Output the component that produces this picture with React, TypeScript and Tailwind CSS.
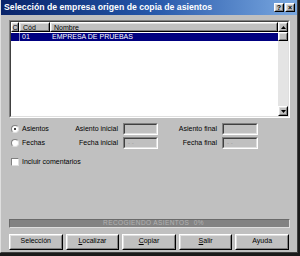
import React from "react";

const font = { fontFamily: '"Liberation Sans", Arial, sans-serif' };

const Raised = ({ className = "", children }: { className?: string; children?: React.ReactNode }) => (
    <div className={`border border-t-white border-l-white border-r-black border-b-black ${className}`}>
        <div className="h-full w-full border border-t-[#dfdfdf] border-l-[#dfdfdf] border-r-[#808080] border-b-[#808080] flex items-center justify-center">
            {children}
        </div>
    </div>
);

const Field = ({ placeholder }: { placeholder?: string }) => (
    <div className="h-[12px] border border-t-[#808080] border-l-[#808080] border-r-white border-b-white">
        <div className="h-full border border-t-[#404040] border-l-[#404040] border-r-[#dfdfdf] border-b-[#dfdfdf] bg-[#c0c0c0] text-[6px] text-[#9a9a9a] pl-[3px] leading-[9px]">
            {placeholder}
        </div>
    </div>
);

const Radio = ({ checked }: { checked?: boolean }) => (
    <span className="relative inline-block w-[8px] h-[8px] rounded-full bg-white border border-t-[#808080] border-l-[#808080] border-r-[#dfdfdf] border-b-[#dfdfdf]">
        {checked && <span className="absolute left-[2px] top-[2px] w-[2px] h-[2px] rounded-full bg-black" />}
    </span>
);

const ArrowBtn = ({ up }: { up?: boolean }) => (
    <Raised className="w-[10px] h-[10px] bg-[#c0c0c0]">
        <svg width="5" height="3" viewBox="0 0 5 3">
            {up ? <polygon points="2.5,0 5,3 0,3" fill="black" /> : <polygon points="0,0 5,0 2.5,3" fill="black" />}
        </svg>
    </Raised>
);

const buttons = [
    { label: "Selección", u: "" },
    { label: "Localizar", u: "L" },
    { label: "Copiar", u: "C" },
    { label: "Salir", u: "S" },
    { label: "Ayuda", u: "" },
];

export default function App() {
    return (
        <div style={font} className="w-[300px] h-[256px] bg-[#1a1a1a] text-[7px] text-black">
            <div className="w-[298px] h-[253px] bg-[#c0c0c0] border-l border-l-[#dfdfdf] border-r border-r-[#404040] border-b border-b-[#404040] flex flex-col">
                {/* title bar */}
                <div className="h-[15px] flex items-center pl-[3px] pr-[2px] bg-gradient-to-r from-[#0a246a] via-[#2556a8] to-[#7aa8e0]">
                    <span className="text-white font-bold text-[8.7px] flex-1">
                        Selección de empresa origen de copia de asientos
                    </span>
                    <Raised className="w-[10px] h-[9px] bg-[#c0c0c0]">
                        <span className="text-[7px] font-bold leading-none">?</span>
                    </Raised>
                    <Raised className="w-[10px] h-[9px] ml-[1px] bg-[#c0c0c0]">
                        <span className="text-[7px] font-bold leading-none">×</span>
                    </Raised>
                </div>

                <div className="flex flex-col px-[8px] pt-[5px]">
                    {/* list box */}
                    <div className="h-[98px] mr-[-1px] border border-t-[#808080] border-l-[#808080] border-r-white border-b-white">
                        <div className="h-full border border-t-[#404040] border-l-[#404040] border-r-[#dfdfdf] border-b-[#dfdfdf] bg-white flex">
                            <div className="flex-1 flex flex-col">
                                <div className="flex h-[10px] bg-[#c0c0c0]">
                                    <Raised className="w-[8px] h-[10px] bg-[#c0c0c0]">
                                        <span className="underline leading-none">C</span>
                                    </Raised>
                                    <Raised className="w-[31px] h-[10px] bg-[#c0c0c0]">
                                        <span className="w-full pl-[2px] leading-none">Cód</span>
                                    </Raised>
                                    <Raised className="flex-1 h-[10px] bg-[#c0c0c0]">
                                        <span className="w-full pl-[2px] leading-none">Nombre</span>
                                    </Raised>
                                </div>
                                <div className="flex h-[8px] mt-[1px] bg-[#000080] text-white leading-[8px]">
                                    <div className="w-[8px]" />
                                    <div className="w-[1px] bg-[#8080c0]" />
                                    <div className="w-[30px] pl-[2px]">01</div>
                                    <div className="flex-1 pl-[2px]">EMPRESA DE PRUEBAS</div>
                                </div>
                            </div>
                            <div className="w-[10px] flex flex-col bg-[#e4e4e4]">
                                <ArrowBtn up />
                                <Raised className="w-[10px] h-[9px] bg-[#c0c0c0]" />
                                <div className="flex-1" />
                                <ArrowBtn />
                            </div>
                        </div>
                    </div>

                    {/* options */}
                    <div className="grid grid-cols-[60px_52px_35px_64px_36px] gap-y-[2px] mt-[5px] pl-[2px] items-center">
                        <div className="flex items-center gap-[3px] h-[12px]">
                            <Radio checked />
                            <span>Asientos</span>
                        </div>
                        <div className="text-right pr-[5px]">Asiento inicial</div>
                        <Field />
                        <div className="text-right pr-[5px]">Asiento final</div>
                        <Field />
                        <div className="flex items-center gap-[3px] h-[12px]">
                            <Radio />
                            <span>Fechas</span>
                        </div>
                        <div className="text-right pr-[5px]">Fecha inicial</div>
                        <Field placeholder="- -" />
                        <div className="text-right pr-[5px]">Fecha final</div>
                        <Field placeholder="- -" />
                    </div>

                    <div className="flex items-center gap-[3px] mt-[8px] pl-[2px]">
                        <span className="w-[8px] h-[8px] bg-white border border-t-[#808080] border-l-[#808080] border-r-[#dfdfdf] border-b-[#dfdfdf]" />
                        <span>Incluir comentarios</span>
                    </div>

                    {/* progress */}
                    <div className="mt-[51px] h-[9px] mr-[-1px] bg-[#838383] border border-t-[#6a6a6a] border-l-[#6a6a6a] border-r-[#dfdfdf] border-b-[#dfdfdf] flex items-center justify-center text-[#b2b2b2] text-[6.5px] tracking-[0.4px] pl-[8px]">
                        RECOGIENDO ASIENTOS&nbsp;&nbsp;0%
                    </div>

                    {/* buttons */}
                    <div className="flex gap-[3px] mt-[6px]">
                        {buttons.map((b) => (
                            <Raised key={b.label} className="w-[54px] h-[16px] bg-[#c0c0c0]">
                                {b.u ? (
                                    <span>
                                        <span className="underline">{b.u}</span>
                                        {b.label.slice(1)}
                                    </span>
                                ) : (
                                    <span>{b.label}</span>
                                )}
                            </Raised>
                        ))}
                    </div>
                </div>
            </div>
        </div>
    );
}
